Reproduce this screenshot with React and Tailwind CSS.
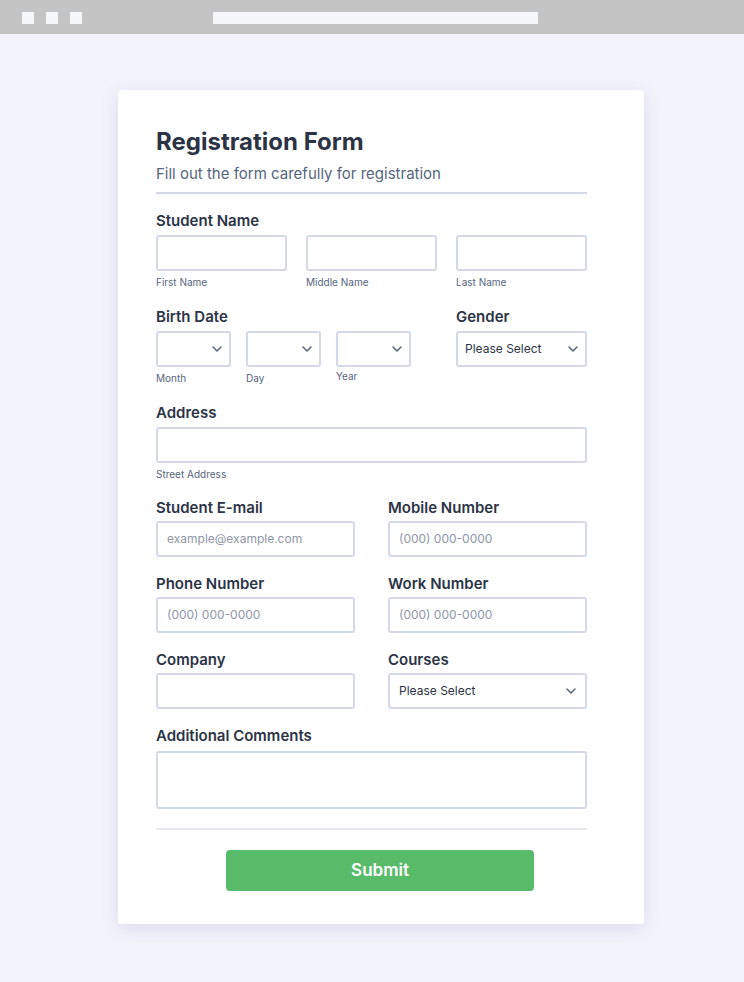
import React from 'react';

const font = { fontFamily: 'Inter, "Noto Sans", sans-serif' };

function Chevron() {
  return (
    <svg width="10" height="6" viewBox="0 0 10 6" fill="none" className="shrink-0">
      <path d="M1 1l4 4 4-4" stroke="#57647e" strokeWidth="1.5" strokeLinecap="round" strokeLinejoin="round" />
    </svg>
  );
}

function Label({ children }) {
  return <div className="text-[15px] leading-5 font-semibold text-[#2c3345]">{children}</div>;
}

function Sub({ children }) {
  return <div className="mt-1 text-[10px] leading-[14px] text-[#57647e]">{children}</div>;
}

function Input({ placeholder }) {
  return (
    <div className="h-9 rounded-[3px] border-2 border-[#d5d8e6] bg-white flex items-center px-[9px]">
      {placeholder && <span className="text-[12px] text-[#8f96a8]">{placeholder}</span>}
    </div>
  );
}

function Select({ text, pad = 'px-[7px]' }) {
  return (
    <div className={`h-9 rounded-[3px] border-2 border-[#d5d8e6] bg-white flex items-center justify-between ${pad}`}>
      <span className="text-[12px] text-[#2c3345]">{text}</span>
      <Chevron />
    </div>
  );
}

export default function App() {
  return (
    <div className="min-h-screen bg-[#f3f3fc]" style={font}>
      {/* browser chrome */}
      <div className="h-[34px] bg-[#c4c4c4] flex items-start pt-3 pl-[22px]">
        <div className="flex gap-3">
          <div className="w-3 h-3 bg-[#f5f7f8]" />
          <div className="w-3 h-3 bg-[#f5f7f8]" />
          <div className="w-3 h-3 bg-[#f5f7f8]" />
        </div>
        <div className="ml-[131px] w-[325px] h-3 bg-[#f5f7f8]" />
      </div>

      <div className="pt-[56px] pb-[58px] pl-[118px]">
        <div className="w-[526px] bg-white rounded-[3px] shadow-[0_4px_18px_rgba(60,66,130,0.13)] pt-[37px] pb-[33px] pl-[38px] pr-[57px]">
          <h1 className="text-[24px] leading-[30px] font-bold text-[#2c3345]">Registration Form</h1>
          <p className="mt-[7px] text-[15px] leading-5 text-[#57647e]">Fill out the form carefully for registration</p>
          <div className="mt-[8px] h-[2px] bg-[#d3d6e3]" />

          {/* Student Name */}
          <div className="mt-[17px]">
            <Label>Student Name</Label>
            <div className="mt-1 grid grid-cols-3 gap-x-[19px]">
              <div>
                <Input />
                <Sub>First Name</Sub>
              </div>
              <div>
                <Input />
                <Sub>Middle Name</Sub>
              </div>
              <div>
                <Input />
                <Sub>Last Name</Sub>
              </div>
            </div>
          </div>

          {/* Birth Date + Gender */}
          <div className="mt-[18px] grid grid-cols-3 gap-x-[19px]">
            <div className="col-span-2">
              <Label>Birth Date</Label>
              <div className="mt-1 flex gap-[15px]">
                <div className="w-[75px]">
                  <Select text="" />
                  <Sub>Month</Sub>
                </div>
                <div className="w-[75px]">
                  <Select text="" />
                  <Sub>Day</Sub>
                </div>
                <div className="w-[75px]">
                  <Select text="" />
                  <div className="mt-[2px] text-[10px] leading-[14px] text-[#57647e]">Year</div>
                </div>
              </div>
            </div>
            <div>
              <Label>Gender</Label>
              <div className="mt-1">
                <Select text="Please Select" />
              </div>
            </div>
          </div>

          {/* Address */}
          <div className="mt-[18px]">
            <Label>Address</Label>
            <div className="mt-1">
              <Input />
              <Sub>Street Address</Sub>
            </div>
          </div>

          {/* two column rows */}
          <div className="mt-[17px] grid grid-cols-2 gap-x-[33px] gap-y-[17px]">
            <div>
              <Label>Student E-mail</Label>
              <div className="mt-[3px]">
                <Input placeholder="example@example.com" />
              </div>
            </div>
            <div>
              <Label>Mobile Number</Label>
              <div className="mt-[3px]">
                <Input placeholder="(000) 000-0000" />
              </div>
            </div>
            <div>
              <Label>Phone Number</Label>
              <div className="mt-[3px]">
                <Input placeholder="(000) 000-0000" />
              </div>
            </div>
            <div>
              <Label>Work Number</Label>
              <div className="mt-[3px]">
                <Input placeholder="(000) 000-0000" />
              </div>
            </div>
            <div>
              <Label>Company</Label>
              <div className="mt-[3px]">
                <Input />
              </div>
            </div>
            <div>
              <Label>Courses</Label>
              <div className="mt-[3px]">
                <Select text="Please Select" pad="px-[9px]" />
              </div>
            </div>
          </div>

          {/* Comments */}
          <div className="mt-[17px]">
            <Label>Additional Comments</Label>
            <div className="mt-[5px] h-[58px] rounded-[3px] border-2 border-[#d5d8e6] bg-white" />
          </div>

          <div className="mt-[19px] h-[2px] bg-[#e6e7ef]" />

          <div className="mt-[20px] pl-[70px]">
            <button className="w-[308px] h-[41px] rounded-[4px] bg-[#58bb69] text-white text-[17px] font-semibold">
              Submit
            </button>
          </div>
        </div>
      </div>
    </div>
  );
}
